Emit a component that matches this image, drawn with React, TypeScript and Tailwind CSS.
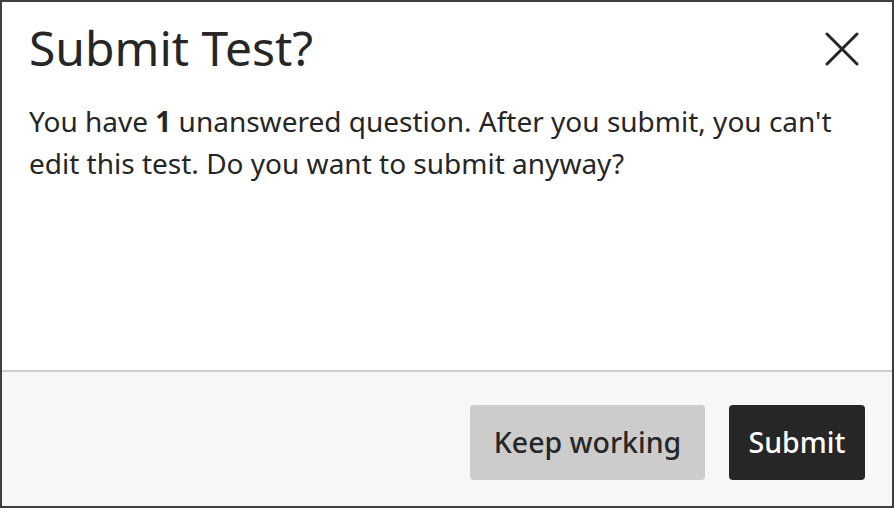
import React from "react";

const App = () => {
  return (
    <div className="w-[894px] h-[508px] border-2 border-[#3f3f3f] bg-white flex flex-col font-['Noto_Sans',sans-serif] text-[#262626]">
      <div className="flex-1 pl-[27px] pr-[29px]">
        <div className="flex justify-between items-start pt-[14px]">
          <h1 className="text-[48px] leading-[64px] font-normal">Submit Test?</h1>
          <button className="mt-[16px] mr-[4px] w-[34px] h-[34px]" aria-label="Close">
            <svg viewBox="0 0 34 34" width="34" height="34">
              <path d="M2 2 L32 32 M32 2 L2 32" stroke="#262626" strokeWidth="3" strokeLinecap="round" />
            </svg>
          </button>
        </div>
        <p className="mt-[20px] text-[28px] leading-[42px]">
          You have <span className="font-bold">1</span> unanswered question. After you submit, you can't edit this test. Do you want to submit anyway?
        </p>
      </div>
      <div className="h-[136px] border-t-2 border-[#cdcdcd] bg-[#f7f7f7] flex items-center justify-end gap-[24px] pr-[27px] pt-[6px]">
        <button className="w-[235px] h-[75px] rounded-[4px] bg-[#cccccc] text-[28.5px] font-medium text-[#262626]">
          Keep working
        </button>
        <button className="w-[136px] h-[75px] rounded-[4px] bg-[#262626] text-[28.5px] font-medium text-white">
          Submit
        </button>
      </div>
    </div>
  );
};

export default App;
